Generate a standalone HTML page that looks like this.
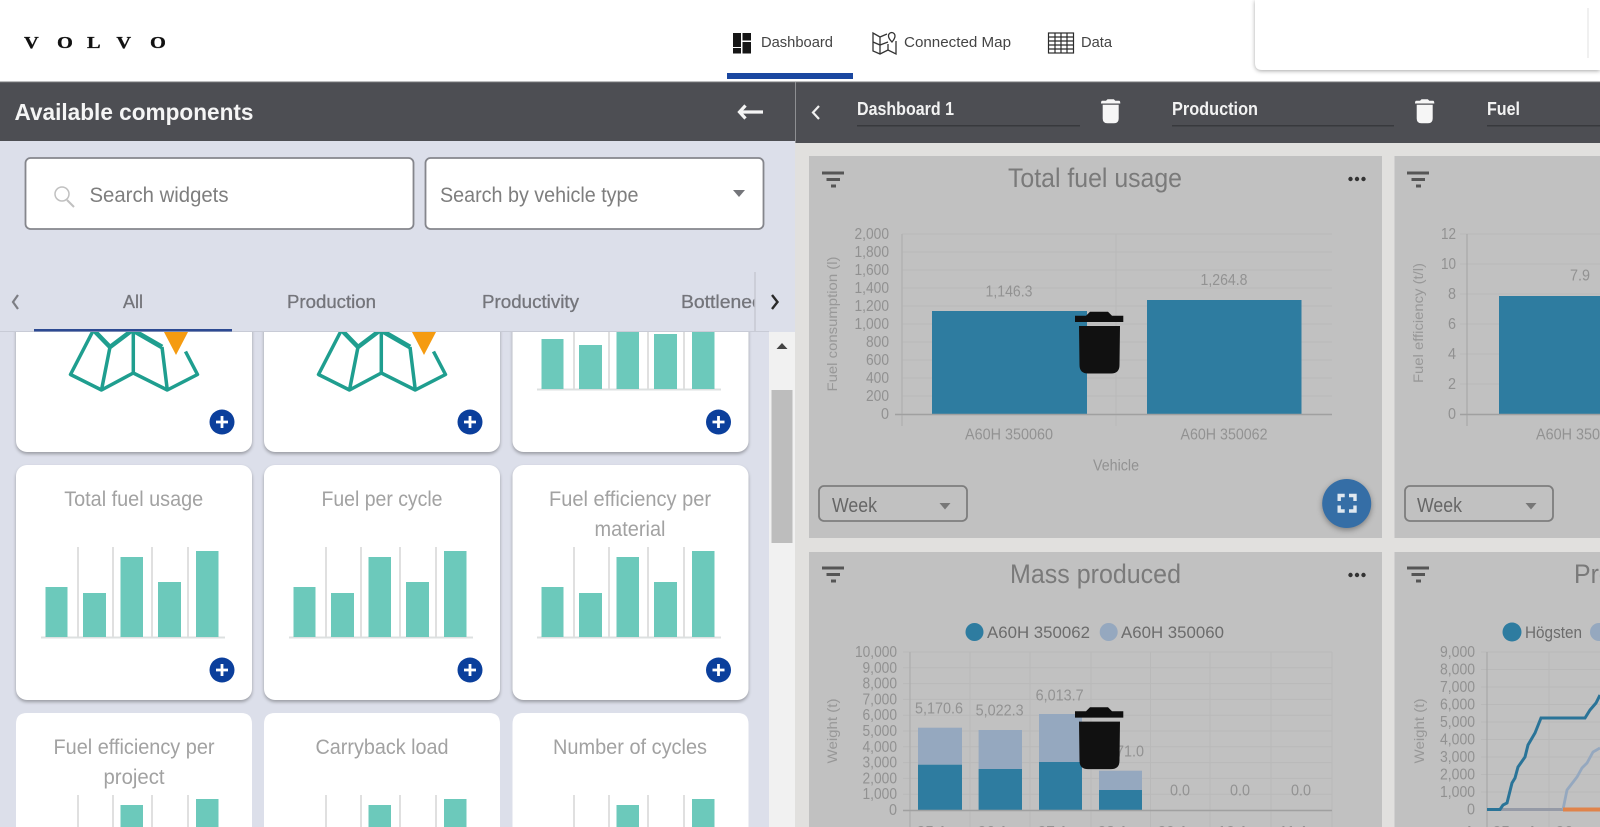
<!DOCTYPE html>
<html lang="en">
<head>
<meta charset="utf-8">
<title>Volvo Dashboard</title>
<style>
html,body{margin:0;padding:0;width:1600px;height:827px;overflow:hidden;background:#fff}
svg{display:block;font-family:"Liberation Sans",sans-serif;filter:blur(.35px)}
.cardt{font-size:21px;fill:#a2a2a2;text-anchor:middle}
.tab{font-size:18px;fill:#74757b;stroke:#74757b;stroke-width:.3}
.nav{font-size:15px;fill:#444}
.dk{font-size:18px;fill:#f2f2f2;font-weight:bold}
.ct{font-size:27px;fill:#7a7a7a}
.yl{font-size:16px;fill:#919191;text-anchor:end}
.dl{font-size:15.500px;fill:#929292;text-anchor:middle}
.at{font-size:14px;fill:#989898;text-anchor:middle}
.lg{font-size:17px;fill:#6c6c6c}
.wk{font-size:20px;fill:#666}
.sr{font-size:21px;fill:#7e7e7e}
</style>
</head>
<body>
<svg width="1600" height="827" viewBox="0 0 1600 827" xmlns="http://www.w3.org/2000/svg">
<defs>
  <clipPath id="tabclip"><rect x="0" y="270" width="755" height="62"/></clipPath>
  <g id="plus">
    <circle cx="222" cy="670" r="12.500" fill="#0b3f9c"/>
    <path d="M216 670H228M222 664V676" stroke="#fff" stroke-width="2.800"/>
  </g>
  <g id="card">
    <rect x="16" y="465" width="236" height="235" rx="11" fill="#fff" style="filter:drop-shadow(0 2px 1.500px rgba(0,0,0,.3))"/>
    <use href="#plus"/>
  </g>
  <path id="card3" d="M16 827V724Q16 713 27 713H241Q252 713 252 724V827Z" fill="#fff"/>
  <g id="bars">
    <path d="M78 547V637M113 547V637M152 547V637M188 547V637" stroke="#d6d6d6" stroke-width="1.500"/>
    <path d="M41 637.500H225" stroke="#dde0e0" stroke-width="2"/>
    <g fill="#6cc9bb">
      <rect x="45.500" y="587" width="22" height="50"/>
      <rect x="83" y="593" width="23" height="44"/>
      <rect x="120.500" y="557" width="22.500" height="80"/>
      <rect x="158" y="582" width="23" height="55"/>
      <rect x="196" y="551" width="22.500" height="86"/>
    </g>
  </g>
  <g id="bars3">
    <path d="M78 795V827M113 795V827M152 795V827M188 795V827" stroke="#d6d6d6" stroke-width="1.500"/>
    <rect x="120.500" y="805" width="22.500" height="22" fill="#6cc9bb"/>
    <rect x="196" y="799" width="22.500" height="28" fill="#6cc9bb"/>
  </g>
  <g id="map">
    <path d="M93.500 330L70.500 374.500L101.500 390L133.300 373L167.300 390L197.500 374.500L185.500 351.500" fill="none" stroke="#1f9e8f" stroke-width="3.500" stroke-linejoin="round"/>
    <path d="M93.500 330L110 347L132.500 330" fill="none" stroke="#1f9e8f" stroke-width="4.500"/>
    <path d="M132.500 330L162 347" fill="none" stroke="#1f9e8f" stroke-width="5"/>
    <path d="M110 347L101.500 390M133.300 330V373M162 347L167.300 390" fill="none" stroke="#1f9e8f" stroke-width="3.500"/>
    <path d="M164 332L188 332L176 355Z" fill="#f59b11"/>
  </g>
  <g id="wtrash">
    <path d="M1106 100.800L1107.500 99.300H1113.800L1115.300 100.800H1119Q1120.300 100.800 1120.300 103.500H1101Q1101 100.800 1102.300 100.800Z" fill="#f6f6f6"/>
    <path d="M1102.700 104.800H1118.700V118.500Q1118.700 123.300 1114 123.300H1107.400Q1102.700 123.300 1102.700 118.500Z" fill="#f6f6f6"/>
  </g>
  <g id="btrash">
    <path d="M1075 315.700H1086L1090 311.700H1108L1112 315.700H1123.300V322H1075Z" fill="#0f0f0f"/>
    <path d="M1079 326H1120L1119.500 365Q1119.500 373.500 1111 373.500H1088Q1079.500 373.500 1079.500 365Z" fill="#111"/>
  </g>
  <g id="filt">
    <path d="M822 173H844M826.500 179.500H840M831 186H836" stroke="#565656" stroke-width="3" fill="none"/>
  </g>
  <g id="dots" fill="#333"><circle cx="1350.500" cy="179" r="2.200"/><circle cx="1357" cy="179" r="2.200"/><circle cx="1363.500" cy="179" r="2.200"/></g>
  <g id="week">
    <rect x="819" y="486" width="148" height="35" rx="5" fill="none" stroke="#7d7d7d" stroke-width="1.800"/>
    <path d="M939.500 503H950.500L945 509.500Z" fill="#777"/>
  </g>
</defs>

<!-- top nav -->
<rect x="0" y="0" width="1600" height="82" fill="#fff"/>
<text transform="translate(0,48) scale(1.2,1)" x="20 47.500 72.500 97 125" font-family="Liberation Serif" font-weight="bold" font-size="17" fill="#111" stroke="#111" stroke-width=".3">VOLVO</text>

<g fill="#161616">
  <rect x="733" y="33" width="8" height="14"/><rect x="733" y="48" width="8" height="5.500"/>
  <rect x="742.500" y="33" width="8.500" height="7.500"/><rect x="742.500" y="42" width="8.500" height="11.500"/>
</g>
<text class="nav" x="761" y="47" textLength="72" lengthAdjust="spacingAndGlyphs">Dashboard</text>
<rect x="727" y="73" width="126" height="6" fill="#1a47a0"/>

<g fill="none" stroke="#333" stroke-width="1.300">
  <path d="M887 34L880 37L873 33V51L880 54L888 50L896 54V41"/>
  <path d="M880 37V54M888 44V50M873 42L880 45L888 42"/>
  <path d="M891.700 32.500A3.500 3.500 0 0 1 895 36C895 38.500 892 42 892 42S888.500 38.500 888.500 36A3.300 3.300 0 0 1 891.700 32.500Z"/>
</g>
<text class="nav" x="904" y="47" textLength="107" lengthAdjust="spacingAndGlyphs">Connected Map</text>

<g fill="none" stroke="#2b2b2b" stroke-width="1.200">
  <rect x="1048.500" y="33" width="25" height="20"/>
  <path d="M1048.500 37H1073.500M1048.500 41H1073.500M1048.500 45H1073.500M1048.500 49H1073.500M1055 33V53M1061 33V53M1067 33V53"/>
</g>
<text class="nav" x="1081" y="47" textLength="31" lengthAdjust="spacingAndGlyphs">Data</text>

<path d="M1255 0V63Q1255 70 1262 70H1600V0Z" fill="#fff" style="filter:drop-shadow(0 1.500px 2px rgba(0,0,0,.35))"/>
<path d="M1588 8V58" stroke="#e6e6e6" stroke-width="1.200"/>

<!-- left panel -->
<rect x="0" y="141" width="795" height="686" fill="#dcdfea"/>

<!-- widget cards -->
<use href="#card" transform="translate(0,-248)"/><use href="#map"/>
<use href="#card" transform="translate(248,-248)"/><use href="#map" transform="translate(248,0)"/>
<use href="#card" transform="translate(496.500,-248)"/><use href="#bars" transform="translate(496,-248)"/>

<use href="#card"/><use href="#bars"/>
<use href="#card" transform="translate(248,0)"/><use href="#bars" transform="translate(248,0)"/>
<use href="#card" transform="translate(496.500,0)"/><use href="#bars" transform="translate(496,0)"/>

<use href="#card3"/><use href="#bars3"/>
<use href="#card3" transform="translate(248,0)"/><use href="#bars3" transform="translate(248,0)"/>
<use href="#card3" transform="translate(496.500,0)"/><use href="#bars3" transform="translate(496,0)"/>

<text class="cardt" x="133.700" y="506" textLength="139" lengthAdjust="spacingAndGlyphs">Total fuel usage</text>
<text class="cardt" x="382" y="506" textLength="121" lengthAdjust="spacingAndGlyphs">Fuel per cycle</text>
<text class="cardt" x="630" y="506" textLength="162" lengthAdjust="spacingAndGlyphs">Fuel efficiency per</text>
<text class="cardt" x="630" y="536" textLength="71" lengthAdjust="spacingAndGlyphs">material</text>
<text class="cardt" x="134" y="754" textLength="161" lengthAdjust="spacingAndGlyphs">Fuel efficiency per</text>
<text class="cardt" x="134" y="784" textLength="61" lengthAdjust="spacingAndGlyphs">project</text>
<text class="cardt" x="382" y="754" textLength="133" lengthAdjust="spacingAndGlyphs">Carryback load</text>
<text class="cardt" x="630" y="754" textLength="154" lengthAdjust="spacingAndGlyphs">Number of cycles</text>

<!-- scrollbar -->
<rect x="769" y="332" width="26" height="495" fill="#f1f1f1"/>
<rect x="771.500" y="390" width="21" height="153" fill="#bdbdbd"/>
<path d="M776.500 349H787.500L782 343Z" fill="#444"/>

<!-- panel head: search + tabs -->
<rect x="0" y="141" width="795" height="190" fill="#dcdfea"/>
<rect x="25.500" y="158" width="388" height="71" rx="5" fill="#fff" stroke="#85868c" stroke-width="1.800"/>
<rect x="425.500" y="158" width="338" height="71" rx="5" fill="#fff" stroke="#85868c" stroke-width="1.800"/>
<circle cx="62" cy="194" r="7" fill="none" stroke="#c0c0c0" stroke-width="1.500"/>
<path d="M67 200L74 207" stroke="#c0c0c0" stroke-width="2"/>
<text class="sr" x="89.500" y="202" textLength="139" lengthAdjust="spacingAndGlyphs">Search widgets</text>
<text class="sr" x="440" y="202" textLength="198.500" lengthAdjust="spacingAndGlyphs">Search by vehicle type</text>
<path d="M733 190H745L739 197Z" fill="#74757a"/>

<path d="M18 295L13 302L18 309" fill="none" stroke="#7d7e84" stroke-width="2.200"/>
<text class="tab" x="123" y="308" textLength="20" lengthAdjust="spacingAndGlyphs">All</text>
<text class="tab" x="287" y="308" textLength="89" lengthAdjust="spacingAndGlyphs">Production</text>
<text class="tab" x="482" y="308" textLength="97" lengthAdjust="spacingAndGlyphs">Productivity</text>
<g clip-path="url(#tabclip)"><text class="tab" x="681" y="308" textLength="100" lengthAdjust="spacingAndGlyphs">Bottlenecks</text></g>
<path d="M772 295L777.500 302L772 309" fill="none" stroke="#2a2a2a" stroke-width="2.400"/>
<path d="M755 272V332" stroke="#c6c8d2" stroke-width="1.500"/>
<rect x="0" y="331" width="769" height="1" fill="#c8cbd6"/>
<rect x="34" y="329" width="198" height="2.500" fill="#2d4a92"/>

<!-- dark bars -->
<rect x="0" y="82" width="795" height="59" fill="#4d4e53"/>
<rect x="795" y="82" width="805" height="61" fill="#4d4e53"/>
<rect x="0" y="81.500" width="1600" height="1" fill="#77787b"/>
<rect x="795" y="82" width="1" height="61" fill="#8e8f92"/>
<text x="14.500" y="120" font-size="23" font-weight="bold" fill="#f5f5f5" textLength="239" lengthAdjust="spacingAndGlyphs">Available components</text>
<path d="M745.500 105.500L739.500 112L745.500 118.500M740 112H763" fill="none" stroke="#f5f5f5" stroke-width="3.200"/>
<path d="M819 106L813 112.500L819 119" fill="none" stroke="#f0f0f0" stroke-width="2.200"/>
<text class="dk" x="857" y="115" textLength="97" lengthAdjust="spacingAndGlyphs">Dashboard 1</text>
<rect x="857" y="125" width="223" height="1.500" fill="#38393d"/>
<use href="#wtrash"/>
<text class="dk" x="1172" y="115" textLength="86" lengthAdjust="spacingAndGlyphs">Production</text>
<rect x="1172" y="125" width="222" height="1.500" fill="#38393d"/>
<use href="#wtrash" transform="translate(314,0)"/>
<text class="dk" x="1487" y="115" textLength="33" lengthAdjust="spacingAndGlyphs">Fuel</text>
<rect x="1487" y="125" width="113" height="1.500" fill="#38393d"/>

<!-- right panel -->
<rect x="795" y="143" width="805" height="684" fill="#e1e0de"/>
<rect x="809" y="156" width="573" height="382" fill="#c1c1c1"/>
<rect x="1394.500" y="156" width="206" height="382" fill="#c1c1c1"/>
<rect x="809" y="552" width="573" height="275" fill="#c1c1c1"/>
<rect x="1394.500" y="552" width="206" height="275" fill="#c1c1c1"/>

<!-- chart 1 -->
<use href="#filt"/><use href="#dots"/>
<text class="ct" x="1008" y="187" textLength="174" lengthAdjust="spacingAndGlyphs">Total fuel usage</text>
<path d="M902 234H1332M902 252H1332M902 270H1332M902 288H1332M902 306H1332M902 324H1332M902 342H1332M902 360H1332M902 378H1332M902 396H1332" stroke="#b9b9b9" stroke-width="1"/>
<path d="M1116 234V426" stroke="#b9b9b9"/>
<path d="M902 234V426" stroke="#b0b0b0" stroke-width="1.200"/>
<rect x="932" y="311" width="155" height="103" fill="#2e7ca0"/>
<rect x="1147" y="300" width="154.500" height="114" fill="#2e7ca0"/>
<path d="M895 414.500H1332" stroke="#a0a0a0" stroke-width="1.500"/>
<g transform="translate(0,-1)">
<text class="yl" x="889" y="240" textLength="34.500" lengthAdjust="spacingAndGlyphs">2,000</text><text class="yl" x="889" y="258" textLength="34.500" lengthAdjust="spacingAndGlyphs">1,800</text><text class="yl" x="889" y="276" textLength="34.500" lengthAdjust="spacingAndGlyphs">1,600</text><text class="yl" x="889" y="294" textLength="34.500" lengthAdjust="spacingAndGlyphs">1,400</text><text class="yl" x="889" y="312" textLength="34.500" lengthAdjust="spacingAndGlyphs">1,200</text><text class="yl" x="889" y="330" textLength="34.500" lengthAdjust="spacingAndGlyphs">1,000</text><text class="yl" x="889" y="348" textLength="23" lengthAdjust="spacingAndGlyphs">800</text><text class="yl" x="889" y="366" textLength="23" lengthAdjust="spacingAndGlyphs">600</text><text class="yl" x="889" y="384" textLength="23" lengthAdjust="spacingAndGlyphs">400</text><text class="yl" x="889" y="402" textLength="23" lengthAdjust="spacingAndGlyphs">200</text><text class="yl" x="889" y="420" textLength="8" lengthAdjust="spacingAndGlyphs">0</text>
<text class="dl" x="1009" y="297.500" textLength="47" lengthAdjust="spacingAndGlyphs">1,146.3</text>
<text class="dl" x="1224" y="286" textLength="47" lengthAdjust="spacingAndGlyphs">1,264.8</text>
<text class="dl" x="1009" y="440.500" textLength="88" lengthAdjust="spacingAndGlyphs">A60H 350060</text>
<text class="dl" x="1224" y="440.500" textLength="87" lengthAdjust="spacingAndGlyphs">A60H 350062</text>
</g>
<text class="dl" x="1116" y="470.500" textLength="46" lengthAdjust="spacingAndGlyphs">Vehicle</text>
<text class="at" transform="translate(837,324) rotate(-90)" textLength="135" lengthAdjust="spacingAndGlyphs">Fuel consumption (l)</text>
<use href="#week"/>
<text class="wk" x="832" y="512" textLength="45" lengthAdjust="spacingAndGlyphs">Week</text>
<circle cx="1346.700" cy="503.500" r="24.500" fill="#356ea6" style="filter:drop-shadow(0 2px 3px rgba(0,0,0,.35))"/>
<path d="M1339.200 501V495.500H1344.700M1349 495.500H1355V501M1355 505.500V511H1349M1344.700 511H1339.200V505.500" fill="none" stroke="#dfe8f0" stroke-width="3.400"/>

<!-- chart 2 -->
<use href="#filt" transform="translate(585,0)"/>
<path d="M1460 234H1600M1460 264H1600M1460 294H1600M1460 324H1600M1460 354H1600M1460 384H1600" stroke="#b9b9b9"/>
<path d="M1467 234V426" stroke="#a8a8a8" stroke-width="1.200"/>
<rect x="1499" y="296" width="101" height="118" fill="#2e7ca0"/>
<path d="M1460 414.500H1600" stroke="#a0a0a0" stroke-width="1.500"/>
<g transform="translate(0,-1)">
<text class="yl" x="1456" y="240" textLength="15" lengthAdjust="spacingAndGlyphs">12</text><text class="yl" x="1456" y="270" textLength="15" lengthAdjust="spacingAndGlyphs">10</text><text class="yl" x="1456" y="300" textLength="8" lengthAdjust="spacingAndGlyphs">8</text><text class="yl" x="1456" y="330" textLength="8" lengthAdjust="spacingAndGlyphs">6</text><text class="yl" x="1456" y="360" textLength="8" lengthAdjust="spacingAndGlyphs">4</text><text class="yl" x="1456" y="390" textLength="8" lengthAdjust="spacingAndGlyphs">2</text><text class="yl" x="1456" y="420" textLength="8" lengthAdjust="spacingAndGlyphs">0</text>
<text class="dl" x="1580" y="281.500" textLength="20" lengthAdjust="spacingAndGlyphs">7.9</text>
<text class="dl" x="1580" y="440.500" textLength="88" lengthAdjust="spacingAndGlyphs">A60H 350060</text>
</g>
<text class="at" transform="translate(1423,323) rotate(-90)" textLength="120" lengthAdjust="spacingAndGlyphs">Fuel efficiency (t/l)</text>
<use href="#week" transform="translate(586,0)"/>
<text class="wk" x="1417" y="512" textLength="45" lengthAdjust="spacingAndGlyphs">Week</text>

<!-- chart 3 -->
<use href="#filt" transform="translate(0,395)"/><use href="#dots" transform="translate(0,396)"/>
<text class="ct" x="1010" y="583" textLength="171" lengthAdjust="spacingAndGlyphs">Mass produced</text>
<ellipse cx="974.500" cy="632" rx="9" ry="9" fill="#2e7ca0"/>
<text class="lg" x="987" y="638" textLength="103" lengthAdjust="spacingAndGlyphs">A60H 350062</text>
<ellipse cx="1108.700" cy="632" rx="9" ry="9" fill="#95a8bf"/>
<text class="lg" x="1121" y="638" textLength="103" lengthAdjust="spacingAndGlyphs">A60H 350060</text>
<path d="M903 652H1332M903 667.800H1332M903 683.600H1332M903 699.400H1332M903 715.200H1332M903 731H1332M903 746.800H1332M903 762.600H1332M903 778.400H1332M903 794.200H1332" stroke="#b9b9b9"/>
<path d="M970 652V827M1030 652V827M1091 652V827M1150.500 652V827M1210 652V827M1271 652V827M1332 652V827" stroke="#b9b9b9"/>
<path d="M910 652V827" stroke="#adadad" stroke-width="1.200"/>
<rect x="918" y="727.700" width="44" height="37" fill="#95a8bf"/><rect x="918" y="764.700" width="44" height="45.300" fill="#2e7ca0"/>
<rect x="978.600" y="730" width="43.400" height="39" fill="#95a8bf"/><rect x="978.600" y="769" width="43.400" height="41" fill="#2e7ca0"/>
<rect x="1039" y="714" width="43" height="48" fill="#95a8bf"/><rect x="1039" y="762" width="43" height="48" fill="#2e7ca0"/>
<rect x="1099" y="770.700" width="43" height="19.300" fill="#95a8bf"/><rect x="1099" y="790" width="43" height="20" fill="#2e7ca0"/>
<path d="M903 810.500H1332" stroke="#a0a0a0" stroke-width="1.500"/>
<g transform="translate(0,-1)">
<text class="yl" x="897" y="658" textLength="42" lengthAdjust="spacingAndGlyphs">10,000</text><text class="yl" x="897" y="673.800" textLength="34.500" lengthAdjust="spacingAndGlyphs">9,000</text><text class="yl" x="897" y="689.600" textLength="34.500" lengthAdjust="spacingAndGlyphs">8,000</text><text class="yl" x="897" y="705.400" textLength="34.500" lengthAdjust="spacingAndGlyphs">7,000</text><text class="yl" x="897" y="721.200" textLength="34.500" lengthAdjust="spacingAndGlyphs">6,000</text><text class="yl" x="897" y="737" textLength="34.500" lengthAdjust="spacingAndGlyphs">5,000</text><text class="yl" x="897" y="752.800" textLength="34.500" lengthAdjust="spacingAndGlyphs">4,000</text><text class="yl" x="897" y="768.600" textLength="34.500" lengthAdjust="spacingAndGlyphs">3,000</text><text class="yl" x="897" y="784.400" textLength="34.500" lengthAdjust="spacingAndGlyphs">2,000</text><text class="yl" x="897" y="800.200" textLength="34.500" lengthAdjust="spacingAndGlyphs">1,000</text><text class="yl" x="897" y="816" textLength="8" lengthAdjust="spacingAndGlyphs">0</text>
</g>
<text class="dl" x="939" y="713.500" textLength="48" lengthAdjust="spacingAndGlyphs">5,170.6</text>
<text class="dl" x="999.600" y="715.500" textLength="48" lengthAdjust="spacingAndGlyphs">5,022.3</text>
<text class="dl" x="1059.600" y="700.500" textLength="48" lengthAdjust="spacingAndGlyphs">6,013.7</text>
<text class="dl" x="1120" y="756.500" textLength="48" lengthAdjust="spacingAndGlyphs">2,471.0</text>
<text class="dl" x="1180" y="795.500" textLength="20" lengthAdjust="spacingAndGlyphs">0.0</text><text class="dl" x="1240" y="795.500" textLength="20" lengthAdjust="spacingAndGlyphs">0.0</text><text class="dl" x="1301" y="795.500" textLength="20" lengthAdjust="spacingAndGlyphs">0.0</text>
<text class="dl" x="939" y="837">05 Apr</text><text class="dl" x="1000" y="837">06 Apr</text><text class="dl" x="1060" y="837">07 Apr</text><text class="dl" x="1120" y="837">08 Apr</text><text class="dl" x="1180" y="837">09 Apr</text><text class="dl" x="1240" y="837">10 Apr</text><text class="dl" x="1301" y="837">11 Apr</text>
<text class="at" transform="translate(837,731) rotate(-90)" textLength="65" lengthAdjust="spacingAndGlyphs">Weight (t)</text>

<!-- chart 4 -->
<use href="#filt" transform="translate(585,395)"/>
<text class="ct" x="1574" y="583" textLength="119" lengthAdjust="spacingAndGlyphs">Production</text>
<circle cx="1512" cy="632" r="9.500" fill="#2e7ca0"/>
<text class="lg" x="1525" y="638" textLength="57" lengthAdjust="spacingAndGlyphs">Högsten</text>
<circle cx="1599" cy="632" r="9" fill="#95a8bf"/>
<path d="M1481 652H1600M1481 669.500H1600M1481 687H1600M1481 704.500H1600M1481 722H1600M1481 739.500H1600M1481 757H1600M1481 774.500H1600M1481 792H1600" stroke="#b9b9b9"/>
<path d="M1549 652V827" stroke="#b9b9b9"/>
<path d="M1487 652V827" stroke="#a8a8a8" stroke-width="1.200"/>
<g transform="translate(0,-1)">
<text class="yl" x="1475" y="658" textLength="35" lengthAdjust="spacingAndGlyphs">9,000</text><text class="yl" x="1475" y="675.500" textLength="35" lengthAdjust="spacingAndGlyphs">8,000</text><text class="yl" x="1475" y="693" textLength="35" lengthAdjust="spacingAndGlyphs">7,000</text><text class="yl" x="1475" y="710.500" textLength="35" lengthAdjust="spacingAndGlyphs">6,000</text><text class="yl" x="1475" y="728" textLength="35" lengthAdjust="spacingAndGlyphs">5,000</text><text class="yl" x="1475" y="745.500" textLength="35" lengthAdjust="spacingAndGlyphs">4,000</text><text class="yl" x="1475" y="763" textLength="35" lengthAdjust="spacingAndGlyphs">3,000</text><text class="yl" x="1475" y="780.500" textLength="35" lengthAdjust="spacingAndGlyphs">2,000</text><text class="yl" x="1475" y="798" textLength="35" lengthAdjust="spacingAndGlyphs">1,000</text><text class="yl" x="1475" y="815.500" textLength="8" lengthAdjust="spacingAndGlyphs">0</text>
</g>
<path d="M1487 809.500H1563" stroke="#959aa6" stroke-width="3"/>
<path d="M1563 809.500L1567 790L1577 777L1582 768L1587 763L1593 752L1600 748" fill="none" stroke="#95a8bf" stroke-width="2.800"/>
<path d="M1563 809.500H1600" stroke="#e0834a" stroke-width="4"/>
<path d="M1487 809.500H1500L1503 805L1507 803L1512 783L1515 778L1518 767L1525 757L1528 745L1535 733L1541 718H1585L1590 710L1596 703L1600 695" fill="none" stroke="#2a7498" stroke-width="3"/>
<text class="dl" x="1487" y="837">Apr 05</text><text class="dl" x="1550" y="837">Apr 06</text>
<text class="at" transform="translate(1424,731) rotate(-90)" textLength="65" lengthAdjust="spacingAndGlyphs">Weight (t)</text>

<!-- dragged trash overlays -->
<use href="#btrash"/>
<use href="#btrash" transform="translate(0,395.600)"/>
</svg>
</body>
</html>
